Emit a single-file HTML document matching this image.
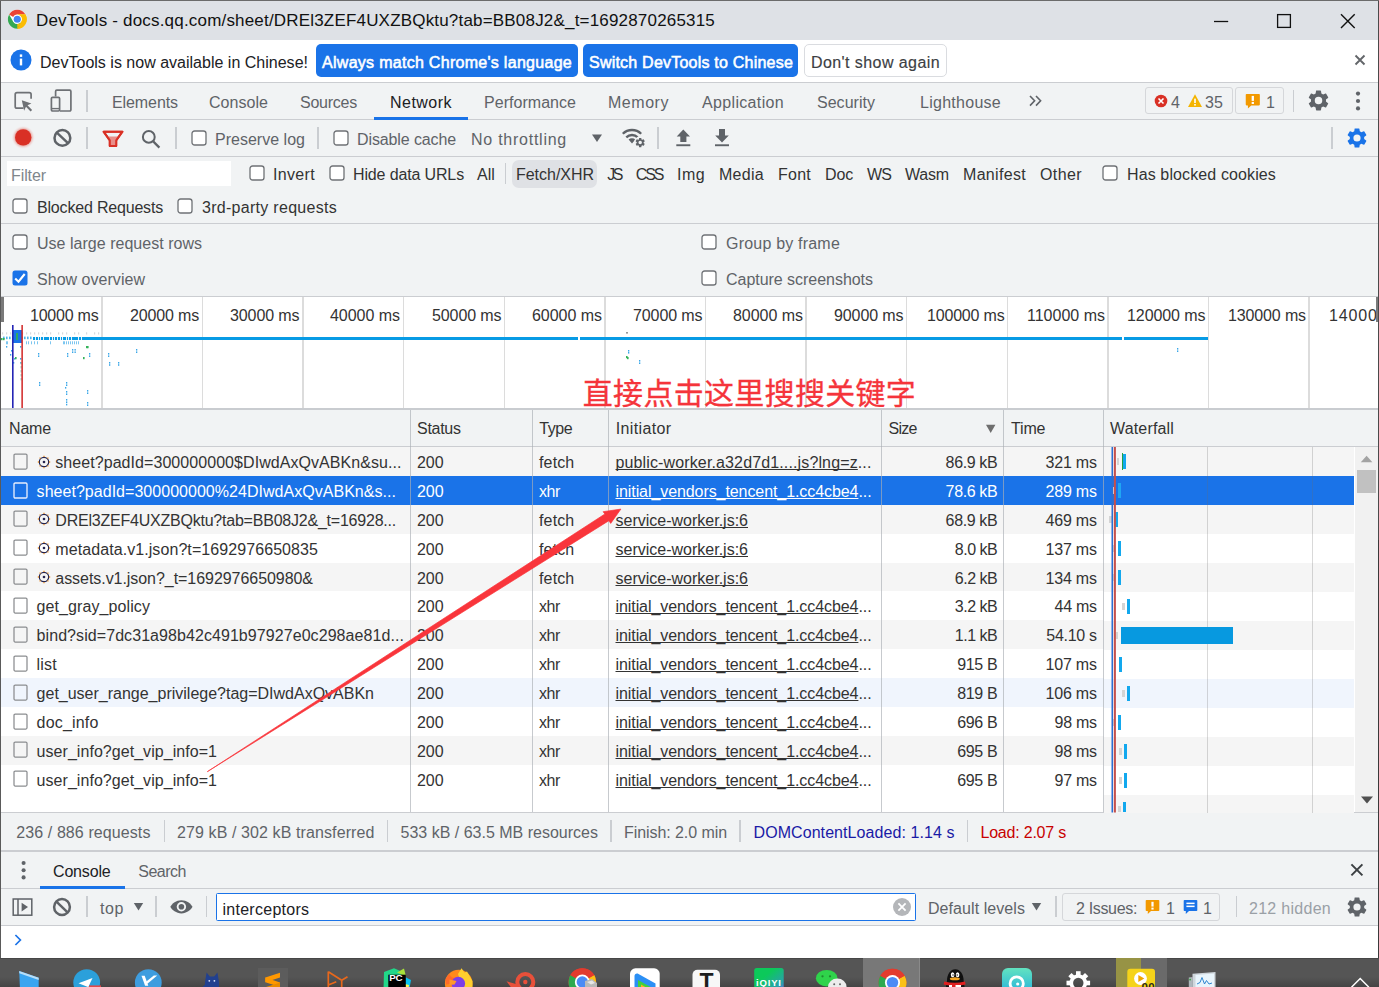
<!DOCTYPE html>
<html lang="en"><head><meta charset="utf-8"><title>DevTools</title>
<style>
html,body{margin:0;padding:0;}
body{width:1379px;height:987px;position:relative;overflow:hidden;background:#fff;font-family:"Liberation Sans", "Noto Sans CJK SC", sans-serif;}
#r{position:absolute;left:0;top:0;width:1379px;height:987px;overflow:hidden;}
#r div,#r svg,#r span{position:absolute;box-sizing:border-box;}
.t{white-space:pre;line-height:24px;height:24px;}
</style></head>
<body><div id="r">
<div style="left:0px;top:0px;width:1379px;height:40px;background:#dee1e6;"></div>
<div style="left:0px;top:0px;width:1379px;height:1px;background:#6b6b6b;"></div>
<div style="left:0px;top:40px;width:1379px;height:43px;background:#ffffff;"></div>
<div style="left:0px;top:82px;width:1379px;height:1px;background:#cbcdd1;"></div>
<div style="left:0px;top:83px;width:1379px;height:36px;background:#f1f3f4;"></div>
<div style="left:0px;top:119px;width:1379px;height:1px;background:#cbcdd1;"></div>
<div style="left:0px;top:120px;width:1379px;height:36px;background:#f1f3f4;"></div>
<div style="left:0px;top:156px;width:1379px;height:1px;background:#cbcdd1;"></div>
<div style="left:0px;top:157px;width:1379px;height:66px;background:#f1f3f4;"></div>
<div style="left:0px;top:223px;width:1379px;height:1px;background:#cbcdd1;"></div>
<div style="left:0px;top:224px;width:1379px;height:72px;background:#f1f3f4;"></div>
<div style="left:0px;top:296px;width:1379px;height:1px;background:#cbcdd1;"></div>
<svg style="left:7.3px;top:8.7px;" width="20.6" height="20.6" viewBox="0 0 48 48">
<circle cx="24" cy="24" r="22" fill="#fff"/>
<path d="M24 2a22 22 0 0 1 19.05 11H24a11 11 0 0 0-9.53 5.5L4.95 13A22 22 0 0 1 24 2z" fill="#ea4335"/>
<path d="M43.05 13A22 22 0 0 1 22.9 45.97L32.43 29.5A11 11 0 0 0 33.53 18.5L24 13z" fill="#fbbc04"/>
<path d="M43.05 13A22 22 0 0 1 24 46l9.53-16.5A11 11 0 0 0 24 13z" fill="#fbbc04"/>
<path d="M4.95 13l9.52 16.5A11 11 0 0 0 24 35l8.43-5.5L24 46A22 22 0 0 1 4.95 13z" fill="#34a853"/>
<path d="M24 35a11 11 0 0 0 9.53-5.5L24 46z" fill="#fbbc04"/>
<circle cx="24" cy="24" r="10.5" fill="#fff"/>
<circle cx="24" cy="24" r="8.3" fill="#4285f4"/>
</svg>
<svg style="left:1200px;top:5px;" width="170" height="30" viewBox="0 0 170 30">
<path d="M14 16.500h14.200" stroke="#111" stroke-width="1.300" fill="none"/>
<rect x="77.6" y="9.6" width="12.8" height="12.8" stroke="#111" stroke-width="1.3" fill="none"/>
<path d="M141 9.300l13.700 13.700M154.700 9.300L141 23" stroke="#111" stroke-width="1.400" fill="none"/>
</svg>
<svg style="left:10.4px;top:49.4px;" width="22" height="22" viewBox="0 0 22 22"><circle cx="11" cy="11" r="10.5" fill="#1a73e8"/><rect x="9.8" y="9.6" width="2.4" height="6.8" fill="#fff"/><rect x="9.8" y="5.4" width="2.4" height="2.5" fill="#fff"/></svg>
<div style="left:316px;top:44px;width:262px;height:33px;background:#1a73e8;border-radius:5px;"></div>
<div style="left:583px;top:44px;width:215px;height:33px;background:#1a73e8;border-radius:5px;"></div>
<div style="left:804px;top:44px;width:143px;height:33px;background:#fff;border:1px solid #dadce0;border-radius:5px;"></div>
<svg style="left:1353px;top:53.3px;" width="14" height="14" viewBox="0 0 14 14"><path d="M2.500 2.500l9 9M11.500 2.500l-9 9" stroke="#63666a" stroke-width="1.900" fill="none"/></svg>
<svg style="left:12px;top:88px;" width="24" height="26" viewBox="0 0 24 26">
<path d="M11.5 20.2H5a1.8 1.8 0 0 1-1.8-1.8V6.4A1.8 1.8 0 0 1 5 4.6h12.3a1.8 1.8 0 0 1 1.8 1.8v4.4" stroke="#6e7175" stroke-width="1.7" fill="none"/>
<path d="M9.8 12.2l9.6 3.2-3.9 1.9 4.6 4.6-1.5 1.5-4.6-4.6-1.9 3.9z" fill="#6e7175"/>
</svg>
<svg style="left:49px;top:87px;" width="24" height="26" viewBox="0 0 24 26">
<path d="M6.6 9.5V4.4a1.2 1.2 0 0 1 1.2-1.2h12.9a1.2 1.2 0 0 1 1.2 1.2v18.4a1.2 1.2 0 0 1-1.2 1.2H11" stroke="#6e7175" stroke-width="1.7" fill="none"/>
<rect x="2.4" y="10.4" width="8.2" height="13.6" rx="1.2" stroke="#6e7175" stroke-width="1.7" fill="none"/>
<path d="M2.4 21.6h8.2" stroke="#6e7175" stroke-width="1.4"/>
</svg>
<div style="left:86.3px;top:90px;width:1.5px;height:22px;background:#cacdd1;"></div>
<div style="left:374px;top:117px;width:94px;height:3px;background:#1a73e8;"></div>
<svg style="left:1027px;top:92px;" width="18" height="18" viewBox="0 0 18 18"><path d="M3 4l4.6 4.8L3 13.6M9 4l4.6 4.8L9 13.6" stroke="#5f6368" stroke-width="1.6" fill="none"/></svg>
<div style="left:1145.2px;top:87.2px;width:87.4px;height:26.4px;background:#f1f3f4;border:1px solid #d5d7da;border-radius:3px;"></div>
<div style="left:1235px;top:87.2px;width:48.9px;height:26.4px;background:#f1f3f4;border:1px solid #d5d7da;border-radius:3px;"></div>
<svg style="left:1154px;top:94px;" width="14" height="14" viewBox="0 0 14 14"><circle cx="7" cy="7" r="6.3" fill="#d93025"/><path d="M4.5 4.5l5 5M9.5 4.5l-5 5" stroke="#fff" stroke-width="1.6"/></svg>
<svg style="left:1187px;top:93px;" width="16" height="15" viewBox="0 0 16 15"><path d="M8 1.2L15 14H1z" fill="#f4b400"/><rect x="7.2" y="5.6" width="1.6" height="4.4" fill="#fff"/><rect x="7.2" y="11" width="1.6" height="1.6" fill="#fff"/></svg>
<svg style="left:1245.2px;top:93.3px;" width="15.6" height="16.6" viewBox="0 0 15 16"><path d="M1.5 1h12a.8.8 0 0 1 .8.8v9.4a.8.8 0 0 1-.8.8H6l-3.2 3V12H1.5a.8.8 0 0 1-.8-.8V1.8A.8.8 0 0 1 1.5 1z" fill="#f29900"/><rect x="6.4" y="2.8" width="2.2" height="4.8" fill="#fff"/><rect x="6.4" y="8.6" width="2.2" height="2" fill="#fff"/></svg>
<div style="left:1292.5px;top:90px;width:1.5px;height:22px;background:#cacdd1;"></div>
<svg style="left:1306px;top:88px;" width="25" height="25" viewBox="0 0 24 24"><path d="M19.14 12.94c.04-.3.06-.61.06-.94 0-.32-.02-.64-.07-.94l2.03-1.58a.49.49 0 0 0 .12-.61l-1.92-3.32a.49.49 0 0 0-.59-.22l-2.39.96c-.5-.38-1.03-.7-1.62-.94l-.36-2.54a.48.48 0 0 0-.48-.41h-3.84c-.24 0-.43.17-.47.41l-.36 2.54c-.59.24-1.13.57-1.62.94l-2.39-.96a.48.48 0 0 0-.59.22L2.74 8.87c-.12.21-.08.47.12.61l2.03 1.58c-.05.3-.09.63-.09.94s.02.64.07.94l-2.03 1.58a.49.49 0 0 0-.12.61l1.92 3.32c.12.22.37.29.59.22l2.39-.96c.5.38 1.03.7 1.62.94l.36 2.54c.05.24.24.41.48.41h3.84c.24 0 .44-.17.47-.41l.36-2.54c.59-.24 1.13-.56 1.62-.94l2.39.96c.22.08.47 0 .59-.22l1.92-3.32c.12-.22.07-.47-.12-.61l-2.01-1.58zM12 15.6A3.6 3.6 0 1 1 12 8.4a3.6 3.6 0 0 1 0 7.2z" fill="#5f6368"/></svg>
<svg style="left:1354.8px;top:91px;" width="6" height="20" viewBox="0 0 6 20"><circle cx="3" cy="2.6" r="2.1" fill="#5f6368"/><circle cx="3" cy="10" r="2.1" fill="#5f6368"/><circle cx="3" cy="17.4" r="2.1" fill="#5f6368"/></svg>
<svg style="left:9px;top:123px;" width="30" height="30" viewBox="0 0 30 30"><defs><radialGradient id="rg"><stop offset="0.68" stop-color="#e8a09a" stop-opacity="0.9"/><stop offset="1" stop-color="#f1f3f4" stop-opacity="0"/></radialGradient></defs><circle cx="14.2" cy="14.4" r="12" fill="url(#rg)"/><circle cx="14.2" cy="14.4" r="8.2" fill="#d93025"/></svg>
<svg style="left:52px;top:127px;" width="22" height="22" viewBox="0 0 22 22"><circle cx="10.400" cy="10.900" r="7.900" stroke="#5f6368" stroke-width="2.500" fill="none"/><path d="M4.800 5.600l11.200 10.600" stroke="#5f6368" stroke-width="2.500"/></svg>
<div style="left:86.3px;top:127px;width:1.5px;height:22px;background:#cacdd1;"></div>
<svg style="left:101px;top:129px;" width="24" height="20" viewBox="0 0 24 20"><path d="M2.6 2.7h18.8l-6.2 8.6v5.7h-6.4v-5.700z" fill="none" stroke="#d93025" stroke-width="2" stroke-linejoin="round"/><path d="M6.2 7.6h11.6l-2.600 3.700v5.700h-6.400v-5.700z" fill="#e88f8a"/><path d="M2.6 2.7h18.8l-6.2 8.6v5.7h-6.4v-5.700z" fill="none" stroke="#d93025" stroke-width="2" stroke-linejoin="round"/></svg>
<svg style="left:139px;top:127px;" width="24" height="24" viewBox="0 0 24 24"><circle cx="9.8" cy="9.9" r="5.9" stroke="#5f6368" stroke-width="2" fill="none"/><path d="M14.2 14.4l6.2 6.2" stroke="#5f6368" stroke-width="2.2"/></svg>
<div style="left:175.3px;top:127px;width:1.5px;height:22px;background:#cacdd1;"></div>
<svg style="left:190.5px;top:129.5px;" width="16" height="16" viewBox="0 0 16 16"><rect x="1" y="1" width="14" height="14" rx="2.6" fill="#fff" stroke="#6f7276" stroke-width="1.3"/></svg>
<div style="left:317.3px;top:127px;width:1.5px;height:22px;background:#cacdd1;"></div>
<svg style="left:332.5px;top:129.5px;" width="16" height="16" viewBox="0 0 16 16"><rect x="1" y="1" width="14" height="14" rx="2.6" fill="#fff" stroke="#6f7276" stroke-width="1.3"/></svg>
<svg style="left:591px;top:133px;" width="12" height="10" viewBox="0 0 12 10"><path d="M1 1.4h10L6 9z" fill="#5f6368"/></svg>
<svg style="left:618px;top:124px;" width="30" height="28" viewBox="618 124 30 28"><path d="M622.8 133.8A13 13 0 0 1 641.2 133.8" stroke="#5f6368" stroke-width="2.3" fill="none"/><path d="M626.3 137.4A8 8 0 0 1 637.7 137.4" stroke="#5f6368" stroke-width="2.3" fill="none"/><path d="M632 143.4L628.6 139.6A4.8 4.8 0 0 1 635.4 139.6z" fill="#5f6368"/><circle cx="640.2" cy="142.6" r="6.3" fill="#f1f3f4"/><g transform="translate(634.4,136.8) scale(0.483)"><path d="M19.14 12.94c.04-.3.06-.61.06-.94 0-.32-.02-.64-.07-.94l2.03-1.58a.49.49 0 0 0 .12-.61l-1.92-3.32a.49.49 0 0 0-.59-.22l-2.39.96c-.5-.38-1.03-.7-1.62-.94l-.36-2.54a.48.48 0 0 0-.48-.41h-3.84c-.24 0-.43.17-.47.41l-.36 2.54c-.59.24-1.13.57-1.62.94l-2.39-.96a.48.48 0 0 0-.59.22L2.74 8.87c-.12.21-.08.47.12.61l2.03 1.58c-.05.3-.09.63-.09.94s.02.64.07.94l-2.03 1.58a.49.49 0 0 0-.12.61l1.92 3.32c.12.22.37.29.59.22l2.39-.96c.5.38 1.03.7 1.62.94l.36 2.54c.05.24.24.41.48.41h3.84c.24 0 .44-.17.47-.41l.36-2.54c.59-.24 1.13-.56 1.62-.94l2.39.96c.22.08.47 0 .59-.22l1.92-3.32c.12-.22.07-.47-.12-.61l-2.01-1.58zM12 15.6A3.6 3.6 0 1 1 12 8.4a3.6 3.6 0 0 1 0 7.2z" fill="#5f6368"/></g></svg>
<div style="left:657.3px;top:127px;width:1.5px;height:22px;background:#cacdd1;"></div>
<svg style="left:670px;top:126px;" width="66" height="24" viewBox="670 126 66 24"><path d="M683.3 129.4L690 136.400H686.400V142H680.300V136.400H676.700z" fill="#5f6368"/><rect x="676.3" y="144.3" width="14" height="1.9" fill="#5f6368"/><path d="M722 142.6L728.800 135.400H725V129H719V135.400H715.200z" fill="#5f6368"/><rect x="715" y="144.3" width="14" height="1.9" fill="#5f6368"/></svg>
<div style="left:1331px;top:127px;width:1.5px;height:22px;background:#cacdd1;"></div>
<svg style="left:1345px;top:126px;" width="24" height="24" viewBox="0 0 24 24"><path d="M19.14 12.94c.04-.3.06-.61.06-.94 0-.32-.02-.64-.07-.94l2.03-1.58a.49.49 0 0 0 .12-.61l-1.92-3.32a.49.49 0 0 0-.59-.22l-2.39.96c-.5-.38-1.03-.7-1.62-.94l-.36-2.54a.48.48 0 0 0-.48-.41h-3.84c-.24 0-.43.17-.47.41l-.36 2.54c-.59.24-1.13.57-1.62.94l-2.39-.96a.48.48 0 0 0-.59.22L2.74 8.87c-.12.21-.08.47.12.61l2.03 1.58c-.05.3-.09.63-.09.94s.02.64.07.94l-2.03 1.58a.49.49 0 0 0-.12.61l1.92 3.32c.12.22.37.29.59.22l2.39-.96c.5.38 1.03.7 1.62.94l.36 2.54c.05.24.24.41.48.41h3.84c.24 0 .44-.17.47-.41l.36-2.54c.59-.24 1.13-.56 1.62-.94l2.39.96c.22.08.47 0 .59-.22l1.92-3.32c.12-.22.07-.47-.12-.61l-2.01-1.58zM12 15.6A3.6 3.6 0 1 1 12 8.4a3.6 3.6 0 0 1 0 7.2z" fill="#1a73e8"/></svg>
<div style="left:7px;top:161px;width:224px;height:25px;background:#fff;"></div>
<svg style="left:248.5px;top:165.2px;" width="16" height="16" viewBox="0 0 16 16"><rect x="1" y="1" width="14" height="14" rx="2.6" fill="#fff" stroke="#6f7276" stroke-width="1.3"/></svg>
<svg style="left:328.5px;top:165.2px;" width="16" height="16" viewBox="0 0 16 16"><rect x="1" y="1" width="14" height="14" rx="2.6" fill="#fff" stroke="#6f7276" stroke-width="1.3"/></svg>
<div style="left:505px;top:163px;width:1.4px;height:21px;background:#cacdd1;"></div>
<div style="left:512.2px;top:160.2px;width:84.6px;height:27.5px;background:#dfe1e5;border-radius:7px;"></div>
<svg style="left:1101.5px;top:165.2px;" width="16" height="16" viewBox="0 0 16 16"><rect x="1" y="1" width="14" height="14" rx="2.6" fill="#fff" stroke="#6f7276" stroke-width="1.3"/></svg>
<svg style="left:12px;top:197.8px;" width="16" height="16" viewBox="0 0 16 16"><rect x="1" y="1" width="14" height="14" rx="2.6" fill="#fff" stroke="#6f7276" stroke-width="1.3"/></svg>
<svg style="left:177px;top:197.8px;" width="16" height="16" viewBox="0 0 16 16"><rect x="1" y="1" width="14" height="14" rx="2.6" fill="#fff" stroke="#6f7276" stroke-width="1.3"/></svg>
<svg style="left:12px;top:233.8px;" width="16" height="16" viewBox="0 0 16 16"><rect x="1" y="1" width="14" height="14" rx="2.6" fill="#fff" stroke="#6f7276" stroke-width="1.3"/></svg>
<svg style="left:701px;top:233.8px;" width="16" height="16" viewBox="0 0 16 16"><rect x="1" y="1" width="14" height="14" rx="2.6" fill="#fff" stroke="#6f7276" stroke-width="1.3"/></svg>
<svg style="left:12px;top:269.6px;" width="16" height="16" viewBox="0 0 16 16"><rect x="0.5" y="0.5" width="15" height="15" rx="2.5" fill="#1a73e8"/><path d="M3.200 8.400l3.300 3.300 6.200-7.700" stroke="#fff" stroke-width="2.100" fill="none"/></svg>
<svg style="left:701px;top:269.6px;" width="16" height="16" viewBox="0 0 16 16"><rect x="1" y="1" width="14" height="14" rx="2.6" fill="#fff" stroke="#6f7276" stroke-width="1.3"/></svg>
<div style="left:0px;top:297px;width:1379px;height:111px;background:#fff;"></div>
<div style="left:101.4px;top:297px;width:1.3px;height:111px;background:#dcdcdc;"></div>
<div style="left:201.9px;top:297px;width:1.3px;height:111px;background:#dcdcdc;"></div>
<div style="left:302.4px;top:297px;width:1.3px;height:111px;background:#dcdcdc;"></div>
<div style="left:402.7px;top:297px;width:1.3px;height:111px;background:#dcdcdc;"></div>
<div style="left:503.9px;top:297px;width:1.3px;height:111px;background:#dcdcdc;"></div>
<div style="left:604.4px;top:297px;width:1.3px;height:111px;background:#dcdcdc;"></div>
<div style="left:704.9px;top:297px;width:1.3px;height:111px;background:#dcdcdc;"></div>
<div style="left:805.4px;top:297px;width:1.3px;height:111px;background:#dcdcdc;"></div>
<div style="left:905.9px;top:297px;width:1.3px;height:111px;background:#dcdcdc;"></div>
<div style="left:1006.9px;top:297px;width:1.3px;height:111px;background:#dcdcdc;"></div>
<div style="left:1107.4px;top:297px;width:1.3px;height:111px;background:#dcdcdc;"></div>
<div style="left:1207.9px;top:297px;width:1.3px;height:111px;background:#dcdcdc;"></div>
<div style="left:1308.4px;top:297px;width:1.3px;height:111px;background:#dcdcdc;"></div>
<div style="left:0px;top:297px;width:3.5px;height:25px;background:#7a7a7a;"></div>
<div style="left:1375.8px;top:297px;width:2px;height:25px;background:#7a7a7a;"></div>
<div style="left:33px;top:336.6px;width:1175px;height:3.1px;background:#079be5;"></div>
<div style="left:35px;top:336.6px;width:1px;height:3.1px;background:#e8f5fd;"></div>
<div style="left:37.5px;top:336.6px;width:1px;height:3.1px;background:#e8f5fd;"></div>
<div style="left:40px;top:336.6px;width:1px;height:3.1px;background:#e8f5fd;"></div>
<div style="left:43px;top:336.6px;width:1px;height:3.1px;background:#e8f5fd;"></div>
<div style="left:49px;top:336.6px;width:1px;height:3.1px;background:#e8f5fd;"></div>
<div style="left:51.5px;top:336.6px;width:1px;height:3.1px;background:#e8f5fd;"></div>
<div style="left:54px;top:336.6px;width:1px;height:3.1px;background:#e8f5fd;"></div>
<div style="left:57px;top:336.6px;width:1px;height:3.1px;background:#e8f5fd;"></div>
<div style="left:59.5px;top:336.6px;width:1px;height:3.1px;background:#e8f5fd;"></div>
<div style="left:62px;top:336.6px;width:1px;height:3.1px;background:#e8f5fd;"></div>
<div style="left:65.5px;top:336.6px;width:1px;height:3.1px;background:#e8f5fd;"></div>
<div style="left:68px;top:336.6px;width:1px;height:3.1px;background:#e8f5fd;"></div>
<div style="left:71px;top:336.6px;width:1px;height:3.1px;background:#e8f5fd;"></div>
<div style="left:78px;top:336.6px;width:1px;height:3.1px;background:#e8f5fd;"></div>
<div style="left:80.5px;top:336.6px;width:1px;height:3.1px;background:#e8f5fd;"></div>
<div style="left:578px;top:336.4px;width:2px;height:3.2px;background:#fff;"></div>
<div style="left:1122px;top:336.4px;width:2px;height:3.2px;background:#fff;"></div>
<svg style="left:0px;top:297px;" width="1379" height="111" viewBox="0 297 1379 111"><rect x="3" y="336.6" width="1.6" height="2.6" fill="#4db5ec"/><rect x="6" y="336.6" width="1.6" height="2.6" fill="#4db5ec"/><rect x="9" y="336.6" width="1.6" height="2.6" fill="#4db5ec"/><rect x="12" y="336.6" width="1.6" height="2.6" fill="#4db5ec"/><rect x="15" y="336.6" width="1.6" height="2.6" fill="#4db5ec"/><rect x="18" y="336.6" width="1.6" height="2.6" fill="#4db5ec"/><rect x="21" y="336.6" width="1.6" height="2.6" fill="#4db5ec"/><rect x="24" y="336.6" width="1.6" height="2.6" fill="#4db5ec"/><rect x="27" y="336.6" width="1.6" height="2.6" fill="#4db5ec"/><rect x="30" y="336.6" width="1.6" height="2.6" fill="#4db5ec"/><rect x="2" y="332.3" width="1.2" height="2.2" fill="#d8dadd"/><rect x="6" y="332.3" width="1.2" height="2.2" fill="#d8dadd"/><rect x="10" y="332.3" width="1.2" height="2.2" fill="#d8dadd"/><rect x="14" y="332.3" width="1.2" height="2.2" fill="#d8dadd"/><rect x="18" y="332.3" width="1.2" height="2.2" fill="#d8dadd"/><rect x="22" y="332.3" width="1.2" height="2.2" fill="#d8dadd"/><rect x="26" y="332.3" width="1.2" height="2.2" fill="#d8dadd"/><rect x="30" y="332.3" width="1.2" height="2.2" fill="#d8dadd"/><rect x="34" y="332.3" width="1.2" height="2.2" fill="#d8dadd"/><rect x="38" y="332.3" width="1.2" height="2.2" fill="#d8dadd"/><rect x="42" y="332.3" width="1.2" height="2.2" fill="#d8dadd"/><rect x="46" y="332.3" width="1.2" height="2.2" fill="#d8dadd"/><rect x="50" y="332.3" width="1.2" height="2.2" fill="#d8dadd"/><rect x="58" y="332.3" width="1.2" height="2.2" fill="#d8dadd"/><rect x="62" y="332.3" width="1.2" height="2.2" fill="#d8dadd"/><rect x="66" y="332.3" width="1.2" height="2.2" fill="#d8dadd"/><rect x="74" y="332.3" width="1.2" height="2.2" fill="#d8dadd"/><rect x="78" y="332.3" width="1.2" height="2.2" fill="#d8dadd"/><rect x="86" y="332.3" width="1.2" height="2.2" fill="#d8dadd"/><rect x="94" y="332.3" width="1.2" height="2.2" fill="#d8dadd"/><rect x="98" y="332.3" width="1.2" height="2.2" fill="#d8dadd"/><rect x="6" y="341.3" width="1" height="3" fill="#7cc6f0"/><rect x="7" y="341.3" width="1" height="3" fill="#7cc6f0"/><rect x="26" y="341.3" width="1" height="3" fill="#7cc6f0"/><rect x="28" y="341.3" width="1" height="3" fill="#7cc6f0"/><rect x="31" y="341.3" width="1" height="3" fill="#7cc6f0"/><rect x="34" y="341.3" width="1" height="3" fill="#7cc6f0"/><rect x="37" y="341.3" width="1" height="3" fill="#7cc6f0"/><rect x="50" y="341.3" width="1" height="3" fill="#7cc6f0"/><rect x="63" y="341.3" width="1" height="3" fill="#7cc6f0"/><rect x="64" y="341.3" width="1" height="3" fill="#7cc6f0"/><rect x="66" y="341.3" width="1" height="3" fill="#7cc6f0"/><rect x="68" y="341.3" width="1" height="3" fill="#7cc6f0"/><rect x="70" y="341.3" width="1" height="3" fill="#7cc6f0"/><rect x="72" y="341.3" width="1" height="3" fill="#7cc6f0"/><rect x="74" y="341.3" width="1" height="3" fill="#7cc6f0"/><rect x="76" y="341.3" width="1" height="3" fill="#7cc6f0"/><rect x="78" y="341.3" width="1" height="3" fill="#7cc6f0"/><rect x="6" y="346" width="1.3" height="1.6" fill="#3aa7e8"/><rect x="11" y="350" width="1.3" height="1.6" fill="#3aa7e8"/><rect x="10" y="354" width="1.3" height="1.6" fill="#3aa7e8"/><rect x="20" y="346" width="1.3" height="1.6" fill="#3aa7e8"/><rect x="38" y="353" width="1.3" height="1.6" fill="#3aa7e8"/><rect x="38" y="355.4" width="1.3" height="1.6" fill="#3aa7e8"/><rect x="67" y="353" width="1.3" height="1.6" fill="#3aa7e8"/><rect x="67" y="355.4" width="1.3" height="1.6" fill="#3aa7e8"/><rect x="72" y="349" width="1.3" height="1.6" fill="#3aa7e8"/><rect x="74.5" y="349" width="1.3" height="1.6" fill="#3aa7e8"/><rect x="72" y="351.4" width="1.3" height="1.6" fill="#3aa7e8"/><rect x="74.5" y="351.4" width="1.3" height="1.6" fill="#3aa7e8"/><rect x="89" y="353" width="1.3" height="1.6" fill="#3aa7e8"/><rect x="89" y="355.4" width="1.3" height="1.6" fill="#3aa7e8"/><rect x="108" y="353" width="1.3" height="1.6" fill="#3aa7e8"/><rect x="108" y="355.4" width="1.3" height="1.6" fill="#3aa7e8"/><rect x="136" y="349" width="1.3" height="1.6" fill="#3aa7e8"/><rect x="136" y="351.4" width="1.3" height="1.6" fill="#3aa7e8"/><rect x="109" y="362" width="1.3" height="1.6" fill="#3aa7e8"/><rect x="118" y="362" width="1.3" height="1.6" fill="#3aa7e8"/><rect x="109" y="364.2" width="1.3" height="1.6" fill="#3aa7e8"/><rect x="118" y="364.2" width="1.3" height="1.6" fill="#3aa7e8"/><rect x="14" y="358" width="1.3" height="1.6" fill="#3aa7e8"/><rect x="20" y="358" width="1.3" height="1.6" fill="#3aa7e8"/><rect x="13" y="362" width="1.3" height="1.6" fill="#3aa7e8"/><rect x="20" y="362" width="1.3" height="1.6" fill="#3aa7e8"/><rect x="39" y="382" width="1.3" height="1.6" fill="#3aa7e8"/><rect x="39" y="384.4" width="1.3" height="1.6" fill="#3aa7e8"/><rect x="66" y="382" width="1.3" height="1.6" fill="#3aa7e8"/><rect x="66" y="384.4" width="1.3" height="1.6" fill="#3aa7e8"/><rect x="65" y="387" width="1.3" height="1.6" fill="#3aa7e8"/><rect x="66" y="391" width="1.3" height="1.6" fill="#3aa7e8"/><rect x="66" y="393.4" width="1.3" height="1.6" fill="#3aa7e8"/><rect x="87" y="390" width="1.3" height="1.6" fill="#3aa7e8"/><rect x="87" y="392.4" width="1.3" height="1.6" fill="#3aa7e8"/><rect x="66" y="399" width="1.3" height="1.6" fill="#3aa7e8"/><rect x="66" y="401.4" width="1.3" height="1.6" fill="#3aa7e8"/><rect x="66" y="403.8" width="1.3" height="1.6" fill="#3aa7e8"/><rect x="87" y="402" width="1.3" height="1.6" fill="#3aa7e8"/><rect x="87" y="404.4" width="1.3" height="1.6" fill="#3aa7e8"/><rect x="628" y="352" width="1.3" height="1.6" fill="#3aa7e8"/><rect x="628" y="350" width="1.3" height="1.6" fill="#3aa7e8"/><rect x="639" y="360" width="1.3" height="1.6" fill="#3aa7e8"/><rect x="639" y="362.4" width="1.3" height="1.6" fill="#3aa7e8"/><rect x="1177" y="348" width="1.3" height="1.6" fill="#3aa7e8"/><rect x="1177" y="350.4" width="1.3" height="1.6" fill="#3aa7e8"/><rect x="1" y="338" width="1.6" height="2.2" fill="#34b35a"/><rect x="3" y="338" width="1.6" height="2.2" fill="#34b35a"/><rect x="86" y="346" width="1.6" height="2.2" fill="#34b35a"/><rect x="87" y="346" width="1.6" height="2.2" fill="#34b35a"/><rect x="83" y="357" width="1.6" height="2.2" fill="#34b35a"/><rect x="626" y="356" width="1.6" height="2.2" fill="#34b35a"/><rect x="627" y="357" width="1.6" height="2.2" fill="#34b35a"/><rect x="15" y="357" width="1.6" height="2.2" fill="#34b35a"/><rect x="626" y="332" width="2" height="1.6" fill="#999"/><rect x="20.5" y="362" width="1.2" height="2.4" fill="#9fd6c8"/><rect x="20.5" y="366" width="1.2" height="2.4" fill="#9fd6c8"/><rect x="20.5" y="370" width="1.2" height="2.4" fill="#9fd6c8"/><rect x="20.5" y="374" width="1.2" height="2.4" fill="#9fd6c8"/><rect x="20.5" y="378" width="1.2" height="2.4" fill="#9fd6c8"/></svg>
<div style="left:13px;top:330px;width:9px;height:13.3px;background:#1a73e8;"></div>
<div style="left:15.5px;top:332.5px;width:2.2px;height:7.5px;background:#2fa765;"></div>
<svg style="left:10px;top:325px;" width="14" height="83" viewBox="10 325 14 83"><rect x="12" y="325" width="1.600" height="83" fill="#2525b5"/><rect x="21.400" y="325" width="1.450" height="83" fill="#d01f1f"/></svg>
<div style="left:0px;top:408px;width:1379px;height:2px;background:#c9ccd0;"></div>
<div style="left:0px;top:410px;width:1379px;height:37px;background:#f1f3f4;"></div>
<div style="left:0px;top:446px;width:1379px;height:1px;background:#cbcdd1;"></div>
<div style="left:0px;top:447px;width:1355.2px;height:365.5px;background:#fff;"></div>
<div style="left:0px;top:447.0px;width:1104.2px;height:28.875px;background:#f5f5f5;"></div>
<div style="left:0px;top:475.875px;width:1104.2px;height:28.875px;background:#1a73e8;"></div>
<div style="left:0px;top:504.75px;width:1104.2px;height:28.875px;background:#f5f5f5;"></div>
<div style="left:0px;top:562.5px;width:1104.2px;height:28.875px;background:#f5f5f5;"></div>
<div style="left:0px;top:620.25px;width:1104.2px;height:28.875px;background:#f5f5f5;"></div>
<div style="left:0px;top:678.0px;width:1104.2px;height:28.875px;background:#f0f5fd;"></div>
<div style="left:0px;top:735.75px;width:1104.2px;height:28.875px;background:#f5f5f5;"></div>
<div style="left:1355.2px;top:447px;width:22.4px;height:365.5px;background:#f1f1f1;"></div>
<div style="left:1357px;top:470px;width:19px;height:23px;background:#c1c1c1;"></div>
<svg style="left:1359px;top:453px;" width="16" height="12" viewBox="0 0 16 12"><path d="M7.600 2.800l5.800 6.400H1.800z" fill="#a3a3a3"/></svg>
<svg style="left:1359px;top:794px;" width="16" height="12" viewBox="0 0 16 12"><path d="M8 9.6l6-7H2z" fill="#505050"/></svg>
<div style="left:409.79999999999995px;top:410px;width:1.3px;height:402.5px;background:rgba(170,174,180,0.66);"></div>
<div style="left:531.8px;top:410px;width:1.3px;height:402.5px;background:rgba(170,174,180,0.66);"></div>
<div style="left:607.8px;top:410px;width:1.3px;height:402.5px;background:rgba(170,174,180,0.66);"></div>
<div style="left:880.8px;top:410px;width:1.3px;height:402.5px;background:rgba(170,174,180,0.66);"></div>
<div style="left:1003.0px;top:410px;width:1.3px;height:402.5px;background:rgba(170,174,180,0.66);"></div>
<div style="left:1102.9px;top:410px;width:1.3px;height:402.5px;background:rgba(170,174,180,0.66);"></div>
<div style="left:0px;top:812px;width:1379px;height:1.2px;background:#cbcdd1;"></div>
<svg style="left:985px;top:424px;" width="12" height="10" viewBox="0 0 12 10"><path d="M1 0.8h9.4L5.7 9z" fill="#6e6e6e"/></svg>
<svg style="left:13.4px;top:452.7375px;" width="15" height="17" viewBox="0 0 15 17"><rect x="1" y="1" width="13" height="15" rx="1.200" fill="none" stroke="#8b8d90" stroke-width="1.250"/></svg>
<svg style="left:37.1px;top:454.6375px;" width="14" height="14" viewBox="0 0 14 14"><circle cx="7" cy="7" r="4.700" stroke="#25254f" stroke-width="1.200" fill="none"/><circle cx="7" cy="7" r="1.300" fill="#25254f"/><g stroke="#e8912d" stroke-width="1.300"><path d="M7 0.800v1.200M7 12v1.200M0.800 7h1.200M12 7h1.200M2.600 2.600l0.900 0.900M10.500 10.500l0.900 0.900M2.600 11.400l0.900-0.900M10.500 3.500l0.900-0.900"/></g></svg>
<svg style="left:13.4px;top:481.6125px;" width="15" height="17" viewBox="0 0 15 17"><rect x="1" y="1" width="13" height="15" rx="1.200" fill="none" stroke="#e8eefc" stroke-width="1.350"/></svg>
<svg style="left:13.4px;top:510.4875px;" width="15" height="17" viewBox="0 0 15 17"><rect x="1" y="1" width="13" height="15" rx="1.200" fill="none" stroke="#8b8d90" stroke-width="1.250"/></svg>
<svg style="left:37.1px;top:512.3875px;" width="14" height="14" viewBox="0 0 14 14"><circle cx="7" cy="7" r="4.700" stroke="#25254f" stroke-width="1.200" fill="none"/><circle cx="7" cy="7" r="1.300" fill="#25254f"/><g stroke="#e8912d" stroke-width="1.300"><path d="M7 0.800v1.200M7 12v1.200M0.800 7h1.200M12 7h1.200M2.600 2.600l0.900 0.900M10.500 10.500l0.900 0.900M2.600 11.400l0.900-0.900M10.500 3.500l0.900-0.900"/></g></svg>
<svg style="left:13.4px;top:539.3625px;" width="15" height="17" viewBox="0 0 15 17"><rect x="1" y="1" width="13" height="15" rx="1.200" fill="none" stroke="#8b8d90" stroke-width="1.250"/></svg>
<svg style="left:37.1px;top:541.2625px;" width="14" height="14" viewBox="0 0 14 14"><circle cx="7" cy="7" r="4.700" stroke="#25254f" stroke-width="1.200" fill="none"/><circle cx="7" cy="7" r="1.300" fill="#25254f"/><g stroke="#e8912d" stroke-width="1.300"><path d="M7 0.800v1.200M7 12v1.200M0.800 7h1.200M12 7h1.200M2.600 2.600l0.900 0.900M10.500 10.500l0.900 0.900M2.600 11.400l0.900-0.900M10.500 3.500l0.900-0.900"/></g></svg>
<svg style="left:13.4px;top:568.2375px;" width="15" height="17" viewBox="0 0 15 17"><rect x="1" y="1" width="13" height="15" rx="1.200" fill="none" stroke="#8b8d90" stroke-width="1.250"/></svg>
<svg style="left:37.1px;top:570.1375px;" width="14" height="14" viewBox="0 0 14 14"><circle cx="7" cy="7" r="4.700" stroke="#25254f" stroke-width="1.200" fill="none"/><circle cx="7" cy="7" r="1.300" fill="#25254f"/><g stroke="#e8912d" stroke-width="1.300"><path d="M7 0.800v1.200M7 12v1.200M0.800 7h1.200M12 7h1.200M2.600 2.600l0.900 0.900M10.500 10.500l0.900 0.900M2.600 11.400l0.900-0.900M10.500 3.500l0.900-0.900"/></g></svg>
<svg style="left:13.4px;top:597.1125px;" width="15" height="17" viewBox="0 0 15 17"><rect x="1" y="1" width="13" height="15" rx="1.200" fill="none" stroke="#8b8d90" stroke-width="1.250"/></svg>
<svg style="left:13.4px;top:625.9875px;" width="15" height="17" viewBox="0 0 15 17"><rect x="1" y="1" width="13" height="15" rx="1.200" fill="none" stroke="#8b8d90" stroke-width="1.250"/></svg>
<svg style="left:13.4px;top:654.8625px;" width="15" height="17" viewBox="0 0 15 17"><rect x="1" y="1" width="13" height="15" rx="1.200" fill="none" stroke="#8b8d90" stroke-width="1.250"/></svg>
<svg style="left:13.4px;top:683.7375px;" width="15" height="17" viewBox="0 0 15 17"><rect x="1" y="1" width="13" height="15" rx="1.200" fill="none" stroke="#8b8d90" stroke-width="1.250"/></svg>
<svg style="left:13.4px;top:712.6125px;" width="15" height="17" viewBox="0 0 15 17"><rect x="1" y="1" width="13" height="15" rx="1.200" fill="none" stroke="#8b8d90" stroke-width="1.250"/></svg>
<svg style="left:13.4px;top:741.4875px;" width="15" height="17" viewBox="0 0 15 17"><rect x="1" y="1" width="13" height="15" rx="1.200" fill="none" stroke="#8b8d90" stroke-width="1.250"/></svg>
<svg style="left:13.4px;top:770.3625px;" width="15" height="17" viewBox="0 0 15 17"><rect x="1" y="1" width="13" height="15" rx="1.200" fill="none" stroke="#8b8d90" stroke-width="1.250"/></svg>
<div style="left:1104.2px;top:447px;width:249.8px;height:29px;background:#f5f5f5;"></div>
<div style="left:1104.2px;top:476px;width:249.8px;height:29px;background:#1a73e8;"></div>
<div style="left:1104.2px;top:505px;width:249.8px;height:29px;background:#f5f5f5;"></div>
<div style="left:1104.2px;top:534px;width:249.8px;height:29px;background:#fff;"></div>
<div style="left:1104.2px;top:563px;width:249.8px;height:29px;background:#f5f5f5;"></div>
<div style="left:1104.2px;top:592px;width:249.8px;height:29px;background:#fff;"></div>
<div style="left:1104.2px;top:621px;width:249.8px;height:29px;background:#f5f5f5;"></div>
<div style="left:1104.2px;top:650px;width:249.8px;height:29px;background:#fff;"></div>
<div style="left:1104.2px;top:679px;width:249.8px;height:29px;background:#f0f5fd;"></div>
<div style="left:1104.2px;top:708px;width:249.8px;height:29px;background:#fff;"></div>
<div style="left:1104.2px;top:737px;width:249.8px;height:29px;background:#f5f5f5;"></div>
<div style="left:1104.2px;top:766px;width:249.8px;height:29px;background:#fff;"></div>
<div style="left:1104.2px;top:795px;width:249.8px;height:17.5px;background:#f5f5f5;"></div>
<div style="left:1206.9px;top:447px;width:1.3px;height:365.5px;background:rgba(110,110,110,0.26);"></div>
<div style="left:1311.8000000000002px;top:447px;width:1.3px;height:365.5px;background:rgba(110,110,110,0.26);"></div>
<div style="left:1116.5px;top:458.3px;width:2.2999999999999545px;height:6.4px;background:#d4d4d4;"></div>
<div style="left:1122px;top:452.5px;width:1.099999999999909px;height:17.9px;background:#23a043;"></div>
<div style="left:1123.1px;top:454.1px;width:2.800000000000182px;height:14.8px;background:#12a8ee;"></div>
<div style="left:1112.9px;top:487.3px;width:1.3999999999998636px;height:6.4px;background:#d5dbe8;"></div>
<div style="left:1117.7px;top:483.1px;width:3.0px;height:14.8px;background:#1fa6f3;"></div>
<div style="left:1109.4px;top:516.3px;width:2.3999999999998636px;height:6.4px;background:#d4d4d4;"></div>
<div style="left:1115.4px;top:512.1px;width:2.5px;height:14.8px;background:#12a8ee;"></div>
<div style="left:1112.9px;top:545.3px;width:1.3999999999998636px;height:6.4px;background:#d4d4d4;"></div>
<div style="left:1117.7px;top:541.1px;width:3.0px;height:14.8px;background:#12a8ee;"></div>
<div style="left:1112.9px;top:574.3px;width:1.3999999999998636px;height:6.4px;background:#d4d4d4;"></div>
<div style="left:1117.7px;top:570.1px;width:3.0px;height:14.8px;background:#12a8ee;"></div>
<div style="left:1121.8px;top:603.3px;width:3.0px;height:6.4px;background:#d4d4d4;"></div>
<div style="left:1127px;top:599.1px;width:3px;height:14.8px;background:#12a8ee;"></div>
<div style="left:1115.8px;top:632.3px;width:2.2000000000000455px;height:6.4px;background:#d4d4d4;"></div>
<div style="left:1120.5px;top:627px;width:112.5px;height:17.4px;background:#0799e0;"></div>
<div style="left:1113.7px;top:661.3px;width:1.7999999999999545px;height:6.4px;background:#d4d4d4;"></div>
<div style="left:1119.1px;top:657.1px;width:2.900000000000091px;height:14.8px;background:#12a8ee;"></div>
<div style="left:1121.8px;top:690.3px;width:3.0px;height:6.4px;background:#d4d4d4;"></div>
<div style="left:1127px;top:686.1px;width:3px;height:14.8px;background:#12a8ee;"></div>
<div style="left:1112.4px;top:719.3px;width:2.099999999999909px;height:6.4px;background:#d4d4d4;"></div>
<div style="left:1117.6px;top:715.1px;width:3.1000000000001364px;height:14.8px;background:#12a8ee;"></div>
<div style="left:1119.1px;top:748.3px;width:2.900000000000091px;height:6.4px;background:#d4d4d4;"></div>
<div style="left:1124.3px;top:744.1px;width:3.1000000000001364px;height:14.8px;background:#12a8ee;"></div>
<div style="left:1119.1px;top:777.3px;width:2.900000000000091px;height:6.4px;background:#d4d4d4;"></div>
<div style="left:1124.3px;top:773.1px;width:3.1000000000001364px;height:14.8px;background:#12a8ee;"></div>
<div style="left:1118px;top:806.3px;width:2.7000000000000455px;height:6.0px;background:#d4d4d4;"></div>
<div style="left:1122.7px;top:802.1px;width:3.099999999999909px;height:10.199999999999932px;background:#12a8ee;"></div>
<svg style="left:1110px;top:447px;" width="8" height="365.5" viewBox="1110 447 8 365.5"><rect x="1111.500" y="447" width="1.500" height="365.500" fill="#2b6fd3"/><rect x="1113.800" y="447" width="2.100" height="365.500" fill="#c4504e"/></svg>
<div style="left:0px;top:813px;width:1379px;height:37.5px;background:#f1f3f4;"></div>
<div style="left:0px;top:850.2px;width:1379px;height:1.8px;background:#cbcdd1;"></div>
<div style="left:163.70000000000002px;top:820px;width:1.3px;height:21.5px;background:#cacdd1;"></div>
<div style="left:386.9px;top:820px;width:1.3px;height:21.5px;background:#cacdd1;"></div>
<div style="left:610.4px;top:820px;width:1.3px;height:21.5px;background:#cacdd1;"></div>
<div style="left:739.4px;top:820px;width:1.3px;height:21.5px;background:#cacdd1;"></div>
<div style="left:966.9px;top:820px;width:1.3px;height:21.5px;background:#cacdd1;"></div>
<div style="left:0px;top:852px;width:1379px;height:36.5px;background:#f1f3f4;"></div>
<div style="left:0px;top:888.3px;width:1379px;height:1px;background:#cbcdd1;"></div>
<svg style="left:20px;top:859px;" width="8" height="22" viewBox="0 0 8 22"><circle cx="3.600" cy="4" r="2.050" fill="#5f6368"/><circle cx="3.600" cy="11.200" r="2.050" fill="#5f6368"/><circle cx="3.600" cy="18.400" r="2.050" fill="#5f6368"/></svg>
<div style="left:40px;top:885.6px;width:84.7px;height:3px;background:#1a73e8;"></div>
<svg style="left:1349px;top:862px;" width="16" height="16" viewBox="0 0 16 16"><path d="M2.4 2.4l11 11M13.4 2.4l-11 11" stroke="#3c4043" stroke-width="2" fill="none"/></svg>
<div style="left:0px;top:889.3px;width:1379px;height:36px;background:#f1f3f4;"></div>
<div style="left:0px;top:925.2px;width:1379px;height:1px;background:#cbcdd1;"></div>
<svg style="left:11px;top:896px;" width="24" height="22" viewBox="0 0 24 22"><rect x="2.2" y="3" width="18.6" height="16.2" stroke="#5f6368" stroke-width="1.5" fill="none"/><path d="M7 3v16.2" stroke="#5f6368" stroke-width="1.5"/><path d="M10.6 6.8l6.4 4.3-6.4 4.3z" fill="#5f6368"/></svg>
<svg style="left:51px;top:896px;" width="22" height="22" viewBox="0 0 22 22"><circle cx="11" cy="11" r="7.900" stroke="#5f6368" stroke-width="2.500" fill="none"/><path d="M5.400 5.700l11.200 10.600" stroke="#5f6368" stroke-width="2.500"/></svg>
<div style="left:86.2px;top:896px;width:1.4px;height:21px;background:#cacdd1;"></div>
<svg style="left:133px;top:902px;" width="11" height="10" viewBox="0 0 11 10"><path d="M0.8 1h9.4L5.5 8.6z" fill="#5f6368"/></svg>
<div style="left:155.2px;top:896px;width:1.4px;height:21px;background:#cacdd1;"></div>
<svg style="left:169px;top:898px;" width="25" height="18" viewBox="0 0 25 18"><path d="M12.4 2.2C7.2 2.2 3 5.6 1.3 8.8 3 12 7.2 15.4 12.4 15.4S21.800 12 23.5 8.800C21.8 5.600 17.6 2.200 12.400 2.200z" fill="#5f6368"/><circle cx="12.4" cy="8.8" r="4.7" fill="#f1f3f4"/><circle cx="12.4" cy="8.8" r="2.8" fill="#5f6368"/></svg>
<div style="left:205.9px;top:896px;width:1.4px;height:21px;background:#cacdd1;"></div>
<div style="left:215.5px;top:893px;width:700.5px;height:28px;background:#fff;border:1.9px solid #1a73e8;border-radius:1.5px;"></div>
<svg style="left:892px;top:897px;" width="20" height="20" viewBox="0 0 20 20"><circle cx="10" cy="10" r="9" fill="#b4b6b9"/><path d="M6.4 6.4l7.2 7.2M13.6 6.400l-7.200 7.200" stroke="#fff" stroke-width="1.8"/></svg>
<svg style="left:1031px;top:902px;" width="11" height="10" viewBox="0 0 11 10"><path d="M0.8 1h9.4L5.5 8.6z" fill="#5f6368"/></svg>
<div style="left:1055.3px;top:896px;width:1.4px;height:21px;background:#cacdd1;"></div>
<div style="left:1062px;top:893px;width:158px;height:27.6px;background:#f1f3f4;border:1px solid #d5d7da;border-radius:3px;"></div>
<svg style="left:1145px;top:899px;" width="15" height="16" viewBox="0 0 15 16"><path d="M1.5 1h12a.8.8 0 0 1 .8.8v9.4a.8.8 0 0 1-.8.8H6l-3.2 3V12H1.5a.8.8 0 0 1-.8-.8V1.8A.8.8 0 0 1 1.500 1z" fill="#f29900"/><rect x="6.4" y="2.8" width="2.2" height="4.8" fill="#fff"/><rect x="6.400" y="8.6" width="2.2" height="2" fill="#fff"/></svg>
<svg style="left:1183px;top:899px;" width="15" height="16" viewBox="0 0 15 16"><path d="M1.5 1h12a.8.8 0 0 1 .8.8v9.4a.8.8 0 0 1-.8.8H6l-3.2 3V12H1.5a.8.8 0 0 1-.8-.8V1.8A.8.8 0 0 1 1.5 1z" fill="#1a73e8"/><rect x="3.4" y="3.6" width="8.2" height="1.5" fill="#fff"/><rect x="3.4" y="6.6" width="8.2" height="1.5" fill="#fff"/></svg>
<div style="left:1235.5px;top:896px;width:1.4px;height:21px;background:#cacdd1;"></div>
<svg style="left:1345px;top:895px;" width="24" height="24" viewBox="0 0 24 24"><path d="M19.14 12.94c.04-.3.06-.61.06-.94 0-.32-.02-.64-.07-.94l2.03-1.58a.49.49 0 0 0 .12-.61l-1.92-3.32a.49.49 0 0 0-.59-.22l-2.39.96c-.5-.38-1.03-.7-1.62-.94l-.36-2.54a.48.48 0 0 0-.48-.41h-3.84c-.24 0-.43.17-.47.41l-.36 2.54c-.59.24-1.13.57-1.62.94l-2.39-.96a.48.48 0 0 0-.59.22L2.74 8.87c-.12.21-.08.47.12.61l2.03 1.58c-.05.3-.09.63-.09.94s.02.64.07.94l-2.03 1.58a.49.49 0 0 0-.12.61l1.92 3.32c.12.22.37.29.59.22l2.39-.96c.5.38 1.03.7 1.62.94l.36 2.54c.05.24.24.41.48.41h3.84c.24 0 .44-.17.47-.41l.36-2.54c.59-.24 1.13-.56 1.62-.94l2.39.96c.22.08.47 0 .59-.22l1.92-3.32c.12-.22.07-.47-.12-.61l-2.01-1.58zM12 15.6A3.6 3.6 0 1 1 12 8.4a3.6 3.6 0 0 1 0 7.2z" fill="#5f6368"/></svg>
<div style="left:0px;top:926.2px;width:1379px;height:32px;background:#fff;"></div>
<svg style="left:13px;top:933px;" width="10" height="14" viewBox="0 0 10 14"><path d="M2.4 2l5 5-5 5" stroke="#1a73e8" stroke-width="1.7" fill="none"/></svg>
<div style="left:0px;top:1px;width:1.3px;height:957px;background:#5a5a5a;"></div>
<div style="left:1377.9px;top:1px;width:1.1px;height:540px;background:#4a4a4a;"></div>
<div style="left:1377.5px;top:540px;width:1.5px;height:418px;background:#3a3a3a;"></div>
<div style="left:0px;top:958px;width:1379px;height:29px;background:#555555;"></div>
<div style="left:0px;top:957.7px;width:1379px;height:1.5px;background:#474747;"></div>
<div style="left:0px;top:977px;width:1379px;height:10px;background:linear-gradient(#555555,#444444);"></div>
<div style="left:862.8px;top:958px;width:56px;height:29px;background:#787878;"></div>
<div style="left:918.8px;top:958px;width:1.2px;height:29px;background:#8a8a8a;"></div>
<div style="left:1116px;top:958px;width:25px;height:29px;background:#979345;"></div>
<div style="left:1141px;top:958px;width:25.8px;height:29px;background:#6a6a6a;"></div>
<div style="left:258px;top:968px;width:29.5px;height:19px;background:#5c5c5c;"></div>
<svg style="left:0px;top:958px;" width="1379" height="29" viewBox="0 958 1379 29"><path d="M19.200 971l19.500 6.800V990H20z" fill="#3aa5f0"/><path d="M19.200 971l19.500 6.800v2.200L19.300 973.200z" fill="#b9def7"/><circle cx="86.700" cy="982.600" r="13.400" fill="#2ba0db"/><path d="M78.500 983.300l14-5.400-4.200 9.200z" fill="#fff"/><rect x="89" y="985.400" width="12" height="2" fill="#e04a4a"/><circle cx="148.300" cy="982.600" r="13.400" fill="#3e9ddf"/><path d="M141.500 975.800h3.200l3.600 10h-3.200z" fill="#fff"/><path d="M153.800 975.600h3.400l-9.800 8.200-1.400-2z" fill="#fff"/><path d="M205 987.500v-5.500l1.600-9.400 3.200 3.800h4.400l3.200-3.800 1.600 9.400v5.500z" fill="#21408f"/><path d="M202 987.500l3-3v3z" fill="#21408f"/><circle cx="209.300" cy="980.800" r="0.900" fill="#dfe8ff"/><circle cx="214.400" cy="980.800" r="0.900" fill="#dfe8ff"/><path d="M280 972.800v4.600l-14.600 4.800v-4.600z" fill="#ff9800"/><path d="M265.400 977.600l14.600 4.800v4.600l-14.600-4.800z" fill="#ff9800"/><path d="M280 982.400v4.600l-14.600 4.800v-4.600z" fill="#e98a00"/><path d="M328.300 971.600V990M328.300 971.800l13.400 8.400V990M341.700 980.200l5.800-3.400M328.300 985l8-3.300" stroke="#e8681c" stroke-width="1.700" fill="none"/><path d="M384 972l10-3.800 7 3 2 16.800h-19.500z" fill="#21d789"/><path d="M397 972.500l7-4 2 8z" fill="#a8e23a"/><path d="M403 976l8 4-1.500 8h-6z" fill="#07c3f2"/><path d="M405 984l4 1-.5 3h-4z" fill="#fcf84a"/><rect x="388.300" y="974.700" width="17.500" height="13.300" fill="#000"/><circle cx="458.700" cy="983.500" r="13.800" fill="#ff8a1c"/><path d="M458 974l3.500-5.800 3 4.200 2.500-1 5.500 9.500v7h-10z" fill="#ffcf2e"/><path d="M445.500 979l3.500-5 3 3.500 5 .5-4 5.500-7 1z" fill="#ff6a2a"/><circle cx="458.300" cy="983.500" r="6.800" fill="#7c3fe8"/><path d="M449.500 979.500l7 1.500-2 3.500-5 .5z" fill="#ff9a2a"/><circle cx="525.300" cy="982" r="8" fill="none" stroke="#e8503a" stroke-width="4"/><circle cx="525.300" cy="982" r="2.200" fill="#e8503a"/><path d="M506.500 981.200l9.500 2.800 3 4h-7.500z" fill="#e8503a"/><circle cx="582.3" cy="982" r="13.8" fill="#e33b2e"/><path d="M582.3 982L594.25 975.10A13.8 13.8 0 0 1 582.30 995.80z" fill="#fbc116"/><path d="M582.3 982L582.30 995.80A13.8 13.8 0 0 1 570.35 975.10z" fill="#2da94f"/><path d="M570.35 975.10A13.8 13.8 0 0 1 594.25 975.10L588.28 978.55L576.32 978.55z" fill="#e33b2e"/><circle cx="582.3" cy="982" r="7.45" fill="#fff"/><circle cx="582.3" cy="982" r="5.66" fill="#4c8bf5"/><path d="M585 981l7-2 5 4v5h-12z" fill="#b9b9b9"/><path d="M587 982l5-1.500 3 2.500-4 1.500z" fill="#e6e6e6"/><rect x="630" y="968.300" width="29.700" height="24" rx="5.500" fill="#fff"/><path d="M634.500 976c0-2 2-3 4-2l17 9.500v5h-21z" fill="#2b8ff5"/><path d="M638 980l13.500 7.500v1h-13.500z" fill="#3fd13f"/><path d="M641 984.500l6 3.500h-6z" fill="#ffb020"/><rect x="692.500" y="969.700" width="27.500" height="24" rx="5" fill="#f7f7f7"/><defs><linearGradient id="iq" x1="0" y1="0" x2="1" y2="1"><stop offset="0.35" stop-color="#0cc95a"/><stop offset="0.8" stop-color="#2a9fb0"/><stop offset="1" stop-color="#8a58e0"/></linearGradient><linearGradient id="tl" x1="0" y1="0" x2="0" y2="1"><stop offset="0" stop-color="#62e3c0"/><stop offset="1" stop-color="#2ab5da"/></linearGradient></defs><rect x="754.200" y="968" width="29.500" height="24" rx="2.500" fill="url(#iq)"/><ellipse cx="826.700" cy="978.200" rx="10.800" ry="8.300" fill="#2fd34b"/><circle cx="822.500" cy="976.300" r="1.150" fill="#1f8a2e"/><circle cx="830" cy="976.300" r="1.150" fill="#1f8a2e"/><ellipse cx="837.300" cy="987" rx="9.300" ry="8.500" fill="#ececec"/><circle cx="834.200" cy="984.300" r="1" fill="#666"/><circle cx="840" cy="984.300" r="1" fill="#666"/><circle cx="892.5" cy="982.6" r="13.9" fill="#e33b2e"/><path d="M892.5 982.6L904.54 975.65A13.9 13.9 0 0 1 892.50 996.50z" fill="#fbc116"/><path d="M892.5 982.6L892.50 996.50A13.9 13.9 0 0 1 880.46 975.65z" fill="#2da94f"/><path d="M880.46 975.65A13.9 13.9 0 0 1 904.54 975.65L898.52 979.12L886.48 979.12z" fill="#e33b2e"/><circle cx="892.5" cy="982.6" r="7.51" fill="#fff"/><circle cx="892.5" cy="982.6" r="5.70" fill="#4c8bf5"/><path d="M947 981c0-7 3.500-11.800 8.300-11.800s8.400 4.800 8.400 11.800l1 7h-19z" fill="#101010"/><ellipse cx="952.600" cy="974.700" rx="1.800" ry="2.500" fill="#fff"/><ellipse cx="957.600" cy="974.700" rx="1.800" ry="2.500" fill="#fff"/><circle cx="953" cy="975" r="0.700" fill="#111"/><circle cx="957.200" cy="975" r="0.700" fill="#111"/><ellipse cx="954.800" cy="978.700" rx="5" ry="1.500" fill="#f5a623"/><path d="M944.300 981.500q10.500 2.500 20.700 0l.600 3q-11 2.500-22 0z" fill="#e02020"/><rect x="949" y="985" width="12" height="3" fill="#fff"/><rect x="952" y="984.500" width="3.500" height="3.500" fill="#e02020"/><rect x="1002" y="968" width="30" height="24" rx="6" fill="url(#tl)"/><circle cx="1016.700" cy="983.500" r="6.600" fill="none" stroke="#fff" stroke-width="2.800"/><circle cx="1017.700" cy="984" r="1.600" fill="#fff"/><rect x="1127.300" y="968.800" width="27.700" height="22" rx="3" fill="#f5d31a"/><circle cx="1140.500" cy="978.500" r="6.400" fill="#fff"/><path d="M1138.300 975l6 3.500-6 3.500z" fill="#f0a500"/><path d="M1192.500 973.800l23-1.800v16h-23z" fill="#cfd6dc"/><path d="M1195.500 975l18.500-1.400v14.400h-18.500z" fill="#e9f5fc"/><path d="M1197 984l3-1.500 2-5 2.500 6.500 2-3.500 2.500 3.500 3-1" stroke="#2f86d0" stroke-width="1" fill="none"/><path d="M1188.800 977.500l4-.500v11h-4z" fill="#aeb6bc"/><rect x="1189.300" y="978.800" width="1.600" height="1.600" fill="#2fa83a"/><path d="M1351.500 987.200l8.700-8.700 8.700 8.700" stroke="#fff" stroke-width="1.500" fill="none"/></svg>
<svg style="left:1063px;top:968px;" width="30" height="19" viewBox="0 0 30 19"><g transform="translate(15.300,15)"><rect x="-2.300" y="-11.800" width="4.600" height="5" transform="rotate(0)" fill="#fff"/><rect x="-2.300" y="-11.800" width="4.600" height="5" transform="rotate(45)" fill="#fff"/><rect x="-2.300" y="-11.800" width="4.600" height="5" transform="rotate(90)" fill="#fff"/><rect x="-2.300" y="-11.800" width="4.600" height="5" transform="rotate(135)" fill="#fff"/><rect x="-2.300" y="-11.800" width="4.600" height="5" transform="rotate(180)" fill="#fff"/><rect x="-2.300" y="-11.800" width="4.600" height="5" transform="rotate(225)" fill="#fff"/><rect x="-2.300" y="-11.800" width="4.600" height="5" transform="rotate(270)" fill="#fff"/><rect x="-2.300" y="-11.800" width="4.600" height="5" transform="rotate(315)" fill="#fff"/><circle r="7" fill="none" stroke="#fff" stroke-width="3.600"/></g></svg>
<span class="t" style="left:36px;top:8.75px;color:#111;font-size:17px;font-weight:400;letter-spacing:0.185px;">DevTools - docs.qq.com/sheet/DREl3ZEF4UXZBQktu?tab=BB08J2&amp;_t=1692870265315</span>
<span class="t" style="left:40px;top:50.75px;color:#202124;font-size:16px;font-weight:400;letter-spacing:0.008px;">DevTools is now available in Chinese!</span>
<span class="t" style="left:322px;top:50.75px;color:#fff;font-size:16px;font-weight:400;letter-spacing:0.287px;-webkit-text-stroke:0.55px #fff;">Always match Chrome&#x27;s language</span>
<span class="t" style="left:589px;top:50.75px;color:#fff;font-size:16px;font-weight:400;letter-spacing:0.219px;-webkit-text-stroke:0.55px #fff;">Switch DevTools to Chinese</span>
<span class="t" style="left:811px;top:50.75px;color:#3c4043;font-size:16px;font-weight:400;letter-spacing:0.422px;-webkit-text-stroke:0.15px #3c4043;">Don&#x27;t show again</span>
<span class="t" style="left:112px;top:90.75px;color:#5f6368;font-size:16px;font-weight:400;letter-spacing:-0.088px;">Elements</span>
<span class="t" style="left:209px;top:90.75px;color:#5f6368;font-size:16px;font-weight:400;letter-spacing:0.042px;">Console</span>
<span class="t" style="left:300px;top:90.75px;color:#5f6368;font-size:16px;font-weight:400;letter-spacing:-0.243px;">Sources</span>
<span class="t" style="left:390px;top:90.75px;color:#202124;font-size:16px;font-weight:400;letter-spacing:0.473px;">Network</span>
<span class="t" style="left:484px;top:90.75px;color:#5f6368;font-size:16px;font-weight:400;letter-spacing:0.037px;">Performance</span>
<span class="t" style="left:608px;top:90.75px;color:#5f6368;font-size:16px;font-weight:400;letter-spacing:0.536px;">Memory</span>
<span class="t" style="left:702px;top:90.75px;color:#5f6368;font-size:16px;font-weight:400;letter-spacing:0.338px;">Application</span>
<span class="t" style="left:817px;top:90.75px;color:#5f6368;font-size:16px;font-weight:400;letter-spacing:0.025px;">Security</span>
<span class="t" style="left:920px;top:90.75px;color:#5f6368;font-size:16px;font-weight:400;letter-spacing:0.270px;">Lighthouse</span>
<span class="t" style="left:1171px;top:90.75px;color:#5f6368;font-size:16px;font-weight:400;letter-spacing:0.094px;">4</span>
<span class="t" style="left:1205px;top:90.75px;color:#5f6368;font-size:16px;font-weight:400;letter-spacing:0.102px;">35</span>
<span class="t" style="left:1266px;top:90.75px;color:#5f6368;font-size:16px;font-weight:400;letter-spacing:-0.906px;">1</span>
<span class="t" style="left:215px;top:127.75px;color:#5f6368;font-size:16px;font-weight:400;letter-spacing:0.014px;">Preserve log</span>
<span class="t" style="left:357px;top:127.75px;color:#5f6368;font-size:16px;font-weight:400;letter-spacing:-0.115px;">Disable cache</span>
<span class="t" style="left:471px;top:127.75px;color:#5f6368;font-size:16px;font-weight:400;letter-spacing:0.749px;">No throttling</span>
<span class="t" style="left:11px;top:163.75px;color:#80868b;font-size:16px;font-weight:400;letter-spacing:-0.094px;">Filter</span>
<span class="t" style="left:273px;top:162.75px;color:#333;font-size:16px;font-weight:400;letter-spacing:0.331px;">Invert</span>
<span class="t" style="left:353px;top:162.75px;color:#333;font-size:16px;font-weight:400;letter-spacing:-0.140px;">Hide data URLs</span>
<span class="t" style="left:477px;top:162.75px;color:#333;font-size:16px;font-weight:400;letter-spacing:0.073px;">All</span>
<span class="t" style="left:516px;top:162.75px;color:#333;font-size:16px;font-weight:400;letter-spacing:-0.028px;">Fetch/XHR</span>
<span class="t" style="left:607.3px;top:162.75px;color:#333;font-size:16px;font-weight:400;letter-spacing:-2.636px;">JS</span>
<span class="t" style="left:635.8px;top:162.75px;color:#333;font-size:16px;font-weight:400;letter-spacing:-2.102px;">CSS</span>
<span class="t" style="left:677px;top:162.75px;color:#333;font-size:16px;font-weight:400;letter-spacing:0.443px;">Img</span>
<span class="t" style="left:719px;top:162.75px;color:#333;font-size:16px;font-weight:400;letter-spacing:0.284px;">Media</span>
<span class="t" style="left:778px;top:162.75px;color:#333;font-size:16px;font-weight:400;letter-spacing:0.246px;">Font</span>
<span class="t" style="left:825px;top:162.75px;color:#333;font-size:16px;font-weight:400;letter-spacing:-0.151px;">Doc</span>
<span class="t" style="left:867px;top:162.75px;color:#333;font-size:16px;font-weight:400;letter-spacing:-0.891px;">WS</span>
<span class="t" style="left:905px;top:162.75px;color:#333;font-size:16px;font-weight:400;letter-spacing:-0.184px;">Wasm</span>
<span class="t" style="left:963px;top:162.75px;color:#333;font-size:16px;font-weight:400;letter-spacing:0.316px;">Manifest</span>
<span class="t" style="left:1040px;top:162.75px;color:#333;font-size:16px;font-weight:400;letter-spacing:0.397px;">Other</span>
<span class="t" style="left:1127px;top:162.75px;color:#333;font-size:16px;font-weight:400;letter-spacing:0.118px;">Has blocked cookies</span>
<span class="t" style="left:37px;top:195.75px;color:#333;font-size:16px;font-weight:400;letter-spacing:-0.186px;">Blocked Requests</span>
<span class="t" style="left:202px;top:195.75px;color:#333;font-size:16px;font-weight:400;letter-spacing:0.286px;">3rd-party requests</span>
<span class="t" style="left:37px;top:231.75px;color:#5f6368;font-size:16px;font-weight:400;letter-spacing:0.022px;">Use large request rows</span>
<span class="t" style="left:726px;top:231.75px;color:#5f6368;font-size:16px;font-weight:400;letter-spacing:0.203px;">Group by frame</span>
<span class="t" style="left:37px;top:267.75px;color:#5f6368;font-size:16px;font-weight:400;letter-spacing:0.030px;">Show overview</span>
<span class="t" style="left:726px;top:267.75px;color:#5f6368;font-size:16px;font-weight:400;letter-spacing:-0.034px;">Capture screenshots</span>
<span class="t" style="left:30px;top:303.75px;color:#333;font-size:16px;font-weight:400;letter-spacing:-0.221px;">10000 ms</span>
<span class="t" style="left:130px;top:303.75px;color:#333;font-size:16px;font-weight:400;letter-spacing:-0.158px;">20000 ms</span>
<span class="t" style="left:230px;top:303.75px;color:#333;font-size:16px;font-weight:400;letter-spacing:-0.096px;">30000 ms</span>
<span class="t" style="left:330px;top:303.75px;color:#333;font-size:16px;font-weight:400;letter-spacing:-0.033px;">40000 ms</span>
<span class="t" style="left:432px;top:303.75px;color:#333;font-size:16px;font-weight:400;letter-spacing:-0.096px;">50000 ms</span>
<span class="t" style="left:532px;top:303.75px;color:#333;font-size:16px;font-weight:400;letter-spacing:-0.033px;">60000 ms</span>
<span class="t" style="left:633px;top:303.75px;color:#333;font-size:16px;font-weight:400;letter-spacing:-0.096px;">70000 ms</span>
<span class="t" style="left:733px;top:303.75px;color:#333;font-size:16px;font-weight:400;letter-spacing:-0.033px;">80000 ms</span>
<span class="t" style="left:834px;top:303.75px;color:#333;font-size:16px;font-weight:400;letter-spacing:-0.096px;">90000 ms</span>
<span class="t" style="left:927px;top:303.75px;color:#333;font-size:16px;font-weight:400;letter-spacing:-0.186px;">100000 ms</span>
<span class="t" style="left:1027px;top:303.75px;color:#333;font-size:16px;font-weight:400;letter-spacing:0.002px;">110000 ms</span>
<span class="t" style="left:1127px;top:303.75px;color:#333;font-size:16px;font-weight:400;letter-spacing:-0.075px;">120000 ms</span>
<span class="t" style="left:1228px;top:303.75px;color:#333;font-size:16px;font-weight:400;letter-spacing:-0.130px;">130000 ms</span>
<span class="t" style="left:1329px;top:303.75px;color:#333;font-size:16px;font-weight:400;letter-spacing:0.867px;width:46.8px;overflow:hidden;">140000</span>
<span class="t" style="left:582.8px;top:381.75px;color:#f5343b;font-size:30px;font-weight:400;letter-spacing:0.300px;height:40px;line-height:40px;margin-top:-8px;-webkit-text-stroke:0.3px #f5343b;">直接点击这里搜搜关键字</span>
<span class="t" style="left:9px;top:416.75px;color:#333;font-size:16px;font-weight:400;letter-spacing:-0.172px;">Name</span>
<span class="t" style="left:417px;top:416.75px;color:#333;font-size:16px;font-weight:400;letter-spacing:-0.293px;">Status</span>
<span class="t" style="left:539.2px;top:416.75px;color:#333;font-size:16px;font-weight:400;letter-spacing:-0.397px;">Type</span>
<span class="t" style="left:615.7px;top:416.75px;color:#333;font-size:16px;font-weight:400;letter-spacing:0.370px;">Initiator</span>
<span class="t" style="left:888.5px;top:416.75px;color:#333;font-size:16px;font-weight:400;letter-spacing:-0.706px;">Size</span>
<span class="t" style="left:1011px;top:416.75px;color:#333;font-size:16px;font-weight:400;letter-spacing:-0.167px;">Time</span>
<span class="t" style="left:1110px;top:416.75px;color:#333;font-size:16px;font-weight:400;letter-spacing:0.163px;">Waterfall</span>
<span class="t" style="left:55.3px;top:450.75px;color:#333;font-size:16px;font-weight:400;letter-spacing:0.060px;">sheet?padId=300000000$DIwdAxQvABKn&amp;su...</span>
<span class="t" style="left:417px;top:450.75px;color:#333;font-size:16px;font-weight:400;letter-spacing:-0.034px;">200</span>
<span class="t" style="left:539px;top:450.75px;color:#333;font-size:16px;font-weight:400;letter-spacing:0.142px;">fetch</span>
<span class="t" style="left:615.5px;top:450.75px;color:#333;font-size:16px;font-weight:400;letter-spacing:0.132px;"><span style="position:static;text-decoration:underline;text-decoration-thickness:1.2px;text-underline-offset:0.6px;text-decoration-skip-ink:none;">public-worker.a32d7d1....js?lng=z</span>...</span>
<span class="t" style="left:945.5999999999999px;top:450.75px;color:#333;font-size:16px;font-weight:400;letter-spacing:-0.367px;">86.9 kB</span>
<span class="t" style="left:1045.5px;top:450.75px;color:#333;font-size:16px;font-weight:400;letter-spacing:-0.195px;">321 ms</span>
<span class="t" style="left:36.6px;top:479.75px;color:#fff;font-size:16px;font-weight:400;letter-spacing:0.033px;">sheet?padId=300000000%24DIwdAxQvABKn&amp;s...</span>
<span class="t" style="left:417px;top:479.75px;color:#fff;font-size:16px;font-weight:400;letter-spacing:-0.034px;">200</span>
<span class="t" style="left:539px;top:479.75px;color:#fff;font-size:16px;font-weight:400;letter-spacing:-0.478px;">xhr</span>
<span class="t" style="left:615.5px;top:479.75px;color:#fff;font-size:16px;font-weight:400;letter-spacing:-0.079px;"><span style="position:static;text-decoration:underline;text-decoration-thickness:1.2px;text-underline-offset:0.6px;text-decoration-skip-ink:none;">initial_vendors_tencent_1.cc4cbe4</span>...</span>
<span class="t" style="left:945.5999999999999px;top:479.75px;color:#fff;font-size:16px;font-weight:400;letter-spacing:-0.367px;">78.6 kB</span>
<span class="t" style="left:1045.5px;top:479.75px;color:#fff;font-size:16px;font-weight:400;letter-spacing:-0.195px;">289 ms</span>
<span class="t" style="left:55.3px;top:508.75px;color:#333;font-size:16px;font-weight:400;letter-spacing:-0.221px;">DREl3ZEF4UXZBQktu?tab=BB08J2&amp;_t=16928...</span>
<span class="t" style="left:417px;top:508.75px;color:#333;font-size:16px;font-weight:400;letter-spacing:-0.034px;">200</span>
<span class="t" style="left:539px;top:508.75px;color:#333;font-size:16px;font-weight:400;letter-spacing:0.142px;">fetch</span>
<span class="t" style="left:615.5px;top:508.75px;color:#333;font-size:16px;font-weight:400;letter-spacing:0.001px;"><span style="position:static;text-decoration:underline;text-decoration-thickness:1.2px;text-underline-offset:0.6px;text-decoration-skip-ink:none;">service-worker.js:6</span></span>
<span class="t" style="left:945.5999999999999px;top:508.75px;color:#333;font-size:16px;font-weight:400;letter-spacing:-0.367px;">68.9 kB</span>
<span class="t" style="left:1045.5px;top:508.75px;color:#333;font-size:16px;font-weight:400;letter-spacing:-0.195px;">469 ms</span>
<span class="t" style="left:55.3px;top:537.75px;color:#333;font-size:16px;font-weight:400;letter-spacing:0.078px;">metadata.v1.json?t=1692976650835</span>
<span class="t" style="left:417px;top:537.75px;color:#333;font-size:16px;font-weight:400;letter-spacing:-0.034px;">200</span>
<span class="t" style="left:539px;top:537.75px;color:#333;font-size:16px;font-weight:400;letter-spacing:0.142px;">fetch</span>
<span class="t" style="left:615.5px;top:537.75px;color:#333;font-size:16px;font-weight:400;letter-spacing:0.001px;"><span style="position:static;text-decoration:underline;text-decoration-thickness:1.2px;text-underline-offset:0.6px;text-decoration-skip-ink:none;">service-worker.js:6</span></span>
<span class="t" style="left:954.8px;top:537.75px;color:#333;font-size:16px;font-weight:400;letter-spacing:-0.477px;">8.0 kB</span>
<span class="t" style="left:1045.5px;top:537.75px;color:#333;font-size:16px;font-weight:400;letter-spacing:-0.195px;">137 ms</span>
<span class="t" style="left:55.3px;top:566.75px;color:#333;font-size:16px;font-weight:400;letter-spacing:-0.051px;">assets.v1.json?_t=1692976650980&amp;</span>
<span class="t" style="left:417px;top:566.75px;color:#333;font-size:16px;font-weight:400;letter-spacing:-0.034px;">200</span>
<span class="t" style="left:539px;top:566.75px;color:#333;font-size:16px;font-weight:400;letter-spacing:0.142px;">fetch</span>
<span class="t" style="left:615.5px;top:566.75px;color:#333;font-size:16px;font-weight:400;letter-spacing:0.001px;"><span style="position:static;text-decoration:underline;text-decoration-thickness:1.2px;text-underline-offset:0.6px;text-decoration-skip-ink:none;">service-worker.js:6</span></span>
<span class="t" style="left:954.8px;top:566.75px;color:#333;font-size:16px;font-weight:400;letter-spacing:-0.477px;">6.2 kB</span>
<span class="t" style="left:1045.5px;top:566.75px;color:#333;font-size:16px;font-weight:400;letter-spacing:-0.195px;">134 ms</span>
<span class="t" style="left:36.6px;top:594.75px;color:#333;font-size:16px;font-weight:400;letter-spacing:0.088px;">get_gray_policy</span>
<span class="t" style="left:417px;top:594.75px;color:#333;font-size:16px;font-weight:400;letter-spacing:-0.034px;">200</span>
<span class="t" style="left:539px;top:594.75px;color:#333;font-size:16px;font-weight:400;letter-spacing:-0.478px;">xhr</span>
<span class="t" style="left:615.5px;top:594.75px;color:#333;font-size:16px;font-weight:400;letter-spacing:-0.079px;"><span style="position:static;text-decoration:underline;text-decoration-thickness:1.2px;text-underline-offset:0.6px;text-decoration-skip-ink:none;">initial_vendors_tencent_1.cc4cbe4</span>...</span>
<span class="t" style="left:954.8px;top:594.75px;color:#333;font-size:16px;font-weight:400;letter-spacing:-0.477px;">3.2 kB</span>
<span class="t" style="left:1054.5px;top:594.75px;color:#333;font-size:16px;font-weight:400;letter-spacing:-0.256px;">44 ms</span>
<span class="t" style="left:36.6px;top:623.75px;color:#333;font-size:16px;font-weight:400;letter-spacing:0.069px;">bind?sid=7dc31a98b42c491b97927e0c298ae81d...</span>
<span class="t" style="left:417px;top:623.75px;color:#333;font-size:16px;font-weight:400;letter-spacing:-0.034px;">200</span>
<span class="t" style="left:539px;top:623.75px;color:#333;font-size:16px;font-weight:400;letter-spacing:-0.478px;">xhr</span>
<span class="t" style="left:615.5px;top:623.75px;color:#333;font-size:16px;font-weight:400;letter-spacing:-0.079px;"><span style="position:static;text-decoration:underline;text-decoration-thickness:1.2px;text-underline-offset:0.6px;text-decoration-skip-ink:none;">initial_vendors_tencent_1.cc4cbe4</span>...</span>
<span class="t" style="left:954.8px;top:623.75px;color:#333;font-size:16px;font-weight:400;letter-spacing:-0.477px;">1.1 kB</span>
<span class="t" style="left:1046.3px;top:623.75px;color:#333;font-size:16px;font-weight:400;letter-spacing:-0.283px;">54.10 s</span>
<span class="t" style="left:36.6px;top:652.75px;color:#333;font-size:16px;font-weight:400;letter-spacing:0.209px;">list</span>
<span class="t" style="left:417px;top:652.75px;color:#333;font-size:16px;font-weight:400;letter-spacing:-0.034px;">200</span>
<span class="t" style="left:539px;top:652.75px;color:#333;font-size:16px;font-weight:400;letter-spacing:-0.478px;">xhr</span>
<span class="t" style="left:615.5px;top:652.75px;color:#333;font-size:16px;font-weight:400;letter-spacing:-0.079px;"><span style="position:static;text-decoration:underline;text-decoration-thickness:1.2px;text-underline-offset:0.6px;text-decoration-skip-ink:none;">initial_vendors_tencent_1.cc4cbe4</span>...</span>
<span class="t" style="left:957.3px;top:652.75px;color:#333;font-size:16px;font-weight:400;letter-spacing:-0.362px;">915 B</span>
<span class="t" style="left:1045.5px;top:652.75px;color:#333;font-size:16px;font-weight:400;letter-spacing:-0.195px;">107 ms</span>
<span class="t" style="left:36.6px;top:681.75px;color:#333;font-size:16px;font-weight:400;letter-spacing:-0.004px;">get_user_range_privilege?tag=DIwdAxQvABKn</span>
<span class="t" style="left:417px;top:681.75px;color:#333;font-size:16px;font-weight:400;letter-spacing:-0.034px;">200</span>
<span class="t" style="left:539px;top:681.75px;color:#333;font-size:16px;font-weight:400;letter-spacing:-0.478px;">xhr</span>
<span class="t" style="left:615.5px;top:681.75px;color:#333;font-size:16px;font-weight:400;letter-spacing:-0.079px;"><span style="position:static;text-decoration:underline;text-decoration-thickness:1.2px;text-underline-offset:0.6px;text-decoration-skip-ink:none;">initial_vendors_tencent_1.cc4cbe4</span>...</span>
<span class="t" style="left:957.3px;top:681.75px;color:#333;font-size:16px;font-weight:400;letter-spacing:-0.362px;">819 B</span>
<span class="t" style="left:1045.5px;top:681.75px;color:#333;font-size:16px;font-weight:400;letter-spacing:-0.195px;">106 ms</span>
<span class="t" style="left:36.6px;top:710.75px;color:#333;font-size:16px;font-weight:400;letter-spacing:0.175px;">doc_info</span>
<span class="t" style="left:417px;top:710.75px;color:#333;font-size:16px;font-weight:400;letter-spacing:-0.034px;">200</span>
<span class="t" style="left:539px;top:710.75px;color:#333;font-size:16px;font-weight:400;letter-spacing:-0.478px;">xhr</span>
<span class="t" style="left:615.5px;top:710.75px;color:#333;font-size:16px;font-weight:400;letter-spacing:-0.079px;"><span style="position:static;text-decoration:underline;text-decoration-thickness:1.2px;text-underline-offset:0.6px;text-decoration-skip-ink:none;">initial_vendors_tencent_1.cc4cbe4</span>...</span>
<span class="t" style="left:957.3px;top:710.75px;color:#333;font-size:16px;font-weight:400;letter-spacing:-0.362px;">696 B</span>
<span class="t" style="left:1054.5px;top:710.75px;color:#333;font-size:16px;font-weight:400;letter-spacing:-0.256px;">98 ms</span>
<span class="t" style="left:36.6px;top:739.75px;color:#333;font-size:16px;font-weight:400;letter-spacing:0.048px;">user_info?get_vip_info=1</span>
<span class="t" style="left:417px;top:739.75px;color:#333;font-size:16px;font-weight:400;letter-spacing:-0.034px;">200</span>
<span class="t" style="left:539px;top:739.75px;color:#333;font-size:16px;font-weight:400;letter-spacing:-0.478px;">xhr</span>
<span class="t" style="left:615.5px;top:739.75px;color:#333;font-size:16px;font-weight:400;letter-spacing:-0.079px;"><span style="position:static;text-decoration:underline;text-decoration-thickness:1.2px;text-underline-offset:0.6px;text-decoration-skip-ink:none;">initial_vendors_tencent_1.cc4cbe4</span>...</span>
<span class="t" style="left:957.3px;top:739.75px;color:#333;font-size:16px;font-weight:400;letter-spacing:-0.362px;">695 B</span>
<span class="t" style="left:1054.5px;top:739.75px;color:#333;font-size:16px;font-weight:400;letter-spacing:-0.256px;">98 ms</span>
<span class="t" style="left:36.6px;top:768.75px;color:#333;font-size:16px;font-weight:400;letter-spacing:0.048px;">user_info?get_vip_info=1</span>
<span class="t" style="left:417px;top:768.75px;color:#333;font-size:16px;font-weight:400;letter-spacing:-0.034px;">200</span>
<span class="t" style="left:539px;top:768.75px;color:#333;font-size:16px;font-weight:400;letter-spacing:-0.478px;">xhr</span>
<span class="t" style="left:615.5px;top:768.75px;color:#333;font-size:16px;font-weight:400;letter-spacing:-0.079px;"><span style="position:static;text-decoration:underline;text-decoration-thickness:1.2px;text-underline-offset:0.6px;text-decoration-skip-ink:none;">initial_vendors_tencent_1.cc4cbe4</span>...</span>
<span class="t" style="left:957.3px;top:768.75px;color:#333;font-size:16px;font-weight:400;letter-spacing:-0.362px;">695 B</span>
<span class="t" style="left:1054.5px;top:768.75px;color:#333;font-size:16px;font-weight:400;letter-spacing:-0.256px;">97 ms</span>
<span class="t" style="left:16.3px;top:820.75px;color:#5f6368;font-size:16px;font-weight:400;letter-spacing:0.092px;">236 / 886 requests</span>
<span class="t" style="left:177px;top:820.75px;color:#5f6368;font-size:16px;font-weight:400;letter-spacing:0.101px;">279 kB / 302 kB transferred</span>
<span class="t" style="left:400.5px;top:820.75px;color:#5f6368;font-size:16px;font-weight:400;letter-spacing:0.002px;">533 kB / 63.5 MB resources</span>
<span class="t" style="left:624px;top:820.75px;color:#5f6368;font-size:16px;font-weight:400;letter-spacing:-0.070px;">Finish: 2.0 min</span>
<span class="t" style="left:753.5px;top:820.75px;color:#1a1aa6;font-size:16px;font-weight:400;letter-spacing:0.074px;">DOMContentLoaded: 1.14 s</span>
<span class="t" style="left:980.5px;top:820.75px;color:#c80000;font-size:16px;font-weight:400;letter-spacing:-0.215px;">Load: 2.07 s</span>
<span class="t" style="left:53px;top:859.75px;color:#202124;font-size:16px;font-weight:400;letter-spacing:-0.172px;">Console</span>
<span class="t" style="left:138.3px;top:859.75px;color:#5f6368;font-size:16px;font-weight:400;letter-spacing:-0.534px;">Search</span>
<span class="t" style="left:100px;top:896.75px;color:#5f6368;font-size:16px;font-weight:400;letter-spacing:0.517px;">top</span>
<span class="t" style="left:222.5px;top:897.75px;color:#202124;font-size:16px;font-weight:400;letter-spacing:0.267px;">interceptors</span>
<span class="t" style="left:928px;top:896.75px;color:#5f6368;font-size:16px;font-weight:400;letter-spacing:0.068px;">Default levels</span>
<span class="t" style="left:1076px;top:896.75px;color:#5f6368;font-size:16px;font-weight:400;letter-spacing:-0.337px;">2 Issues:</span>
<span class="t" style="left:1166px;top:896.75px;color:#5f6368;font-size:16px;font-weight:400;letter-spacing:-0.906px;">1</span>
<span class="t" style="left:1203px;top:896.75px;color:#5f6368;font-size:16px;font-weight:400;letter-spacing:-0.906px;">1</span>
<span class="t" style="left:1249px;top:896.75px;color:#9aa0a6;font-size:16px;font-weight:400;letter-spacing:0.281px;">212 hidden</span>
<span class="t" style="left:699.5px;top:969.75px;color:#1d1d1d;font-size:23px;font-weight:700;letter-spacing:0.938px;font-family:"Liberation Serif",serif;">T</span>
<span class="t" style="left:389.3px;top:965.75px;color:#fff;font-size:9.8px;font-weight:700;letter-spacing:-0.213px;">PC</span>
<span class="t" style="left:756px;top:970.75px;color:#fff;font-size:9.5px;font-weight:700;letter-spacing:0.829px;">iQIYI</span>
<span class="t" style="left:1141.5px;top:974.75px;color:#2a2a1a;font-size:11.5px;font-weight:700;letter-spacing:0.352px;">00</span>
<svg style="left:0px;top:0px;pointer-events:none;" width="1379" height="987" viewBox="0 0 1379 987"><path d="M207.3 771.7L604.9 514L603.1 511.7L620.9 509.1L610.7 523.4L608.9 520.7Z" fill="#f9353b" stroke="#f9353b" stroke-width="0.7" stroke-linejoin="round"/></svg>
</div></body></html>
